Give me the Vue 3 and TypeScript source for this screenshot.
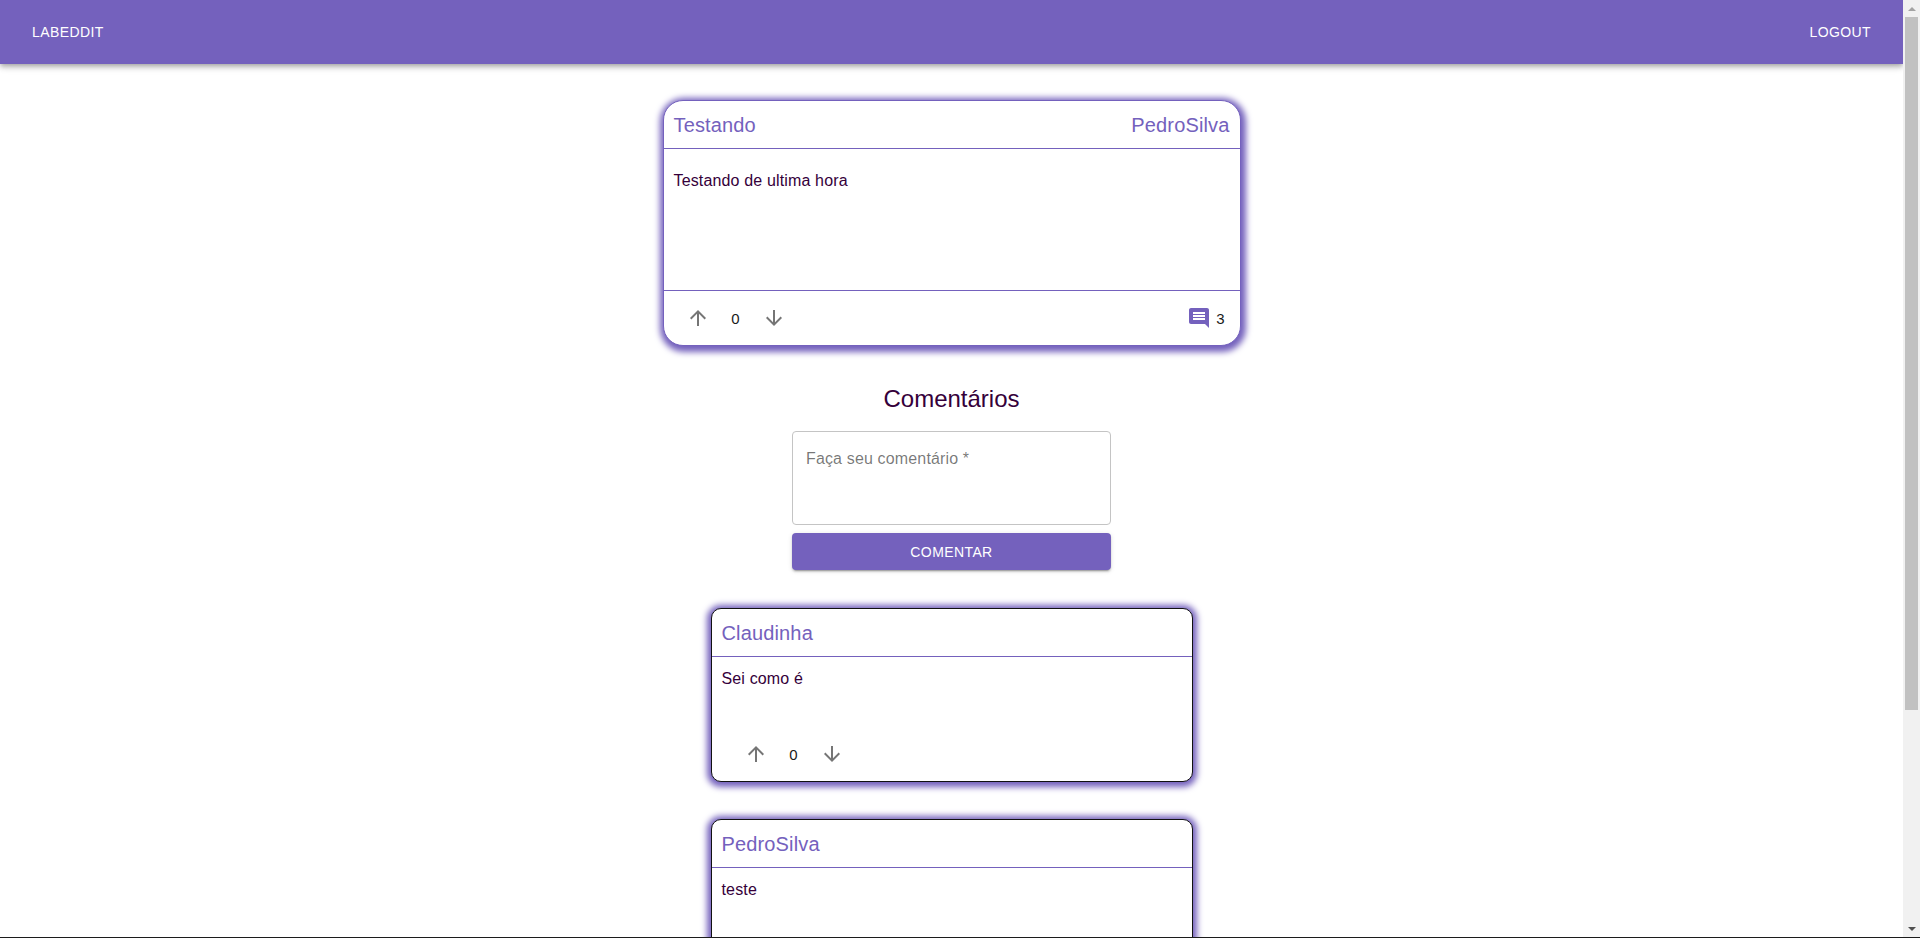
<template>
  <div class="screen">
    <div class="window">
      <div class="page">
        <header class="app-bar">
          <button type="button" class="nav-btn">Labeddit</button>
          <button type="button" class="nav-btn">Logout</button>
        </header>

        <main class="content">
          <article class="post-card">
            <div class="post-head">
              <span>{{ post.title }}</span>
              <span>{{ post.author }}</span>
            </div>
            <p class="post-body">{{ post.text }}</p>
            <div class="post-foot">
              <div class="votes">
                <button type="button" class="icon-btn" aria-label="up">
                  <svg viewBox="0 0 24 24"><path :d="arrowUp" /></svg>
                </button>
                <span class="count">{{ post.votes }}</span>
                <button type="button" class="icon-btn" aria-label="down">
                  <svg viewBox="0 0 24 24"><path :d="arrowDown" /></svg>
                </button>
              </div>
              <div class="comment-count">
                <svg viewBox="0 0 24 24"><path :d="commentIcon" /></svg>
                <span>{{ post.comments }}</span>
              </div>
            </div>
          </article>

          <h2 class="section-title">Comentários</h2>

          <form class="comment-form" @submit.prevent>
            <div class="field">
              <label for="comment-input">Faça seu comentário&nbsp;*</label>
              <textarea id="comment-input" v-model="draft" rows="3"></textarea>
            </div>
            <button type="submit" class="submit">Comentar</button>
          </form>

          <article class="comment-card" v-for="item in comments" :key="item.author">
            <div class="comment-head">{{ item.author }}</div>
            <p class="comment-body">{{ item.text }}</p>
            <div class="votes comment-votes">
              <button type="button" class="icon-btn" aria-label="up">
                <svg viewBox="0 0 24 24"><path :d="arrowUp" /></svg>
              </button>
              <span class="count">{{ item.votes }}</span>
              <button type="button" class="icon-btn" aria-label="down">
                <svg viewBox="0 0 24 24"><path :d="arrowDown" /></svg>
              </button>
            </div>
          </article>
        </main>
      </div>

      <div class="scrollbar">
        <div class="arrow-box"><span class="tri tri-up"></span></div>
        <div class="track"><div class="thumb"></div></div>
        <div class="arrow-box"><span class="tri tri-down"></span></div>
      </div>
    </div>
    <div class="edge"></div>
  </div>
</template>

<script setup lang="ts">
import { ref } from 'vue';

type CommentItem = { author: string; text: string; votes: number };

const arrowUp = 'M4 12l1.41 1.41L11 7.83V20h2V7.83l5.58 5.59L20 12l-8-8-8 8z';
const arrowDown = 'M20 12l-1.41-1.41L13 16.17V4h-2v12.17l-5.58-5.59L4 12l8 8 8-8z';
const commentIcon =
  'M21.99 4c0-1.1-.89-2-1.99-2H4c-1.1 0-2 .9-2 2v12c0 1.1.9 2 2 2h14l4 4-.01-18zM18 14H6v-2h12v2zm0-3H6V9h12v2zm0-3H6V6h12v2z';

const post = {
  title: 'Testando',
  author: 'PedroSilva',
  text: 'Testando de ultima hora',
  votes: 0,
  comments: 3
};

const comments: CommentItem[] = [
  { author: 'Claudinha', text: 'Sei como é', votes: 0 },
  { author: 'PedroSilva', text: 'teste', votes: 0 }
];

const draft = ref('');
</script>

<style>
html,
body {
  margin: 0;
  overflow: hidden;
  background: #fff;
}
</style>

<style scoped>
.screen {
  height: 938px;
  display: flex;
  flex-direction: column;
  font-family: "Liberation Sans", Arial, sans-serif;
  color: #35003a;
}

.window {
  height: 937px;
  display: flex;
}

.edge {
  height: 1px;
  background: #1c1c1c;
}

.page {
  flex: 1;
  min-width: 0;
  overflow: hidden;
  position: relative;
}

.app-bar {
  height: 64px;
  box-sizing: border-box;
  padding: 0 24px;
  display: flex;
  align-items: center;
  justify-content: space-between;
  background: #7461bd;
  box-shadow: 0 2px 4px -1px rgba(0, 0, 0, 0.2), 0 4px 5px 0 rgba(0, 0, 0, 0.14), 0 1px 10px 0 rgba(0, 0, 0, 0.12);
}

.nav-btn {
  padding: 6px 8px;
  border: 0;
  background: none;
  color: #fff;
  font: 14px/1.75 "Liberation Sans", Arial, sans-serif;
  letter-spacing: 0.02857em;
  text-transform: uppercase;
}

.content {
  display: flex;
  flex-direction: column;
  align-items: center;
  padding-top: 36px;
}

.post-card {
  width: 578px;
  box-sizing: border-box;
  border: 1px solid #7461bd;
  border-radius: 20px;
  box-shadow: 1px 2px 6px 4px #7461bd;
  background: #fff;
}

.post-head {
  height: 45px;
  padding: 2px 10px 0;
  display: flex;
  align-items: center;
  justify-content: space-between;
  border-bottom: 1px solid #7461bd;
  color: #7461bd;
  font-size: 20px;
  letter-spacing: 0.0075em;
}

.post-body {
  height: 141px;
  box-sizing: border-box;
  margin: 0;
  padding: 22px 10px 0;
  font-size: 16px;
  line-height: 20px;
  letter-spacing: 0.00938em;
}

.post-foot {
  height: 54px;
  padding: 0 15px 0 10px;
  display: flex;
  align-items: center;
  justify-content: space-between;
  border-top: 1px solid #7461bd;
}

.votes {
  display: flex;
  align-items: center;
}

.icon-btn {
  width: 48px;
  height: 48px;
  padding: 12px;
  border: 0;
  background: none;
}

.icon-btn svg {
  display: block;
  width: 24px;
  height: 24px;
  fill: rgba(0, 0, 0, 0.54);
}

.count {
  width: 28px;
  text-align: center;
  font-size: 15px;
  color: #1a1a1a;
}

.comment-count {
  display: flex;
  align-items: center;
  gap: 5px;
  font-size: 15px;
  color: #1a1a1a;
}

.comment-count svg {
  width: 24px;
  height: 24px;
  fill: #7461bd;
}

.section-title {
  margin: 37px 0 16px;
  font-size: 24px;
  font-weight: 400;
  line-height: 32px;
}

.comment-form {
  width: 319px;
  margin-bottom: 1px;
  display: flex;
  flex-direction: column;
  gap: 8px;
}

.field {
  position: relative;
  height: 94px;
}

.field textarea {
  display: block;
  width: 100%;
  height: 100%;
  box-sizing: border-box;
  border: 1px solid #c4c4c4;
  border-radius: 4px;
  resize: none;
  outline: none;
}

.field label {
  position: absolute;
  left: 14px;
  top: 18px;
  font-size: 16px;
  line-height: 20px;
  letter-spacing: 0.00938em;
  color: rgba(0, 0, 0, 0.54);
}

.submit {
  height: 37px;
  border: 0;
  border-radius: 4px;
  background: #7461bd;
  color: #fff;
  font: 14px "Liberation Sans", Arial, sans-serif;
  letter-spacing: 0.02857em;
  text-transform: uppercase;
  box-shadow: 0 3px 1px -2px rgba(0, 0, 0, 0.2), 0 2px 2px 0 rgba(0, 0, 0, 0.14), 0 1px 5px 0 rgba(0, 0, 0, 0.12);
}

.comment-card {
  width: 482px;
  height: 174px;
  flex: none;
  box-sizing: border-box;
  margin-top: 37px;
  border: 1px solid #111;
  border-radius: 10px;
  box-shadow: 0 1px 6px 4px #7461bd;
  background: #fff;
}

.comment-head {
  height: 45px;
  padding: 2px 10px 0;
  display: flex;
  align-items: center;
  border-bottom: 1px solid #7461bd;
  color: #7461bd;
  font-size: 20px;
  letter-spacing: 0.0075em;
}

.comment-body {
  height: 73px;
  box-sizing: border-box;
  margin: 0;
  padding: 12px 10px 0;
  font-size: 16px;
  line-height: 20px;
  letter-spacing: 0.00938em;
}

.comment-votes {
  padding-left: 20px;
}

.scrollbar {
  width: 17px;
  display: flex;
  flex-direction: column;
  background: #f1f1f1;
}

.arrow-box {
  height: 17px;
  display: flex;
  align-items: center;
  justify-content: center;
}

.tri {
  width: 0;
  height: 0;
  border-left: 4px solid transparent;
  border-right: 4px solid transparent;
}

.tri-up {
  border-bottom: 4px solid #a3a3a3;
}

.tri-down {
  border-top: 4px solid #505050;
}

.track {
  flex: 1;
  padding: 0 2px;
}

.thumb {
  height: 693px;
  background: #c1c1c1;
}
</style>
